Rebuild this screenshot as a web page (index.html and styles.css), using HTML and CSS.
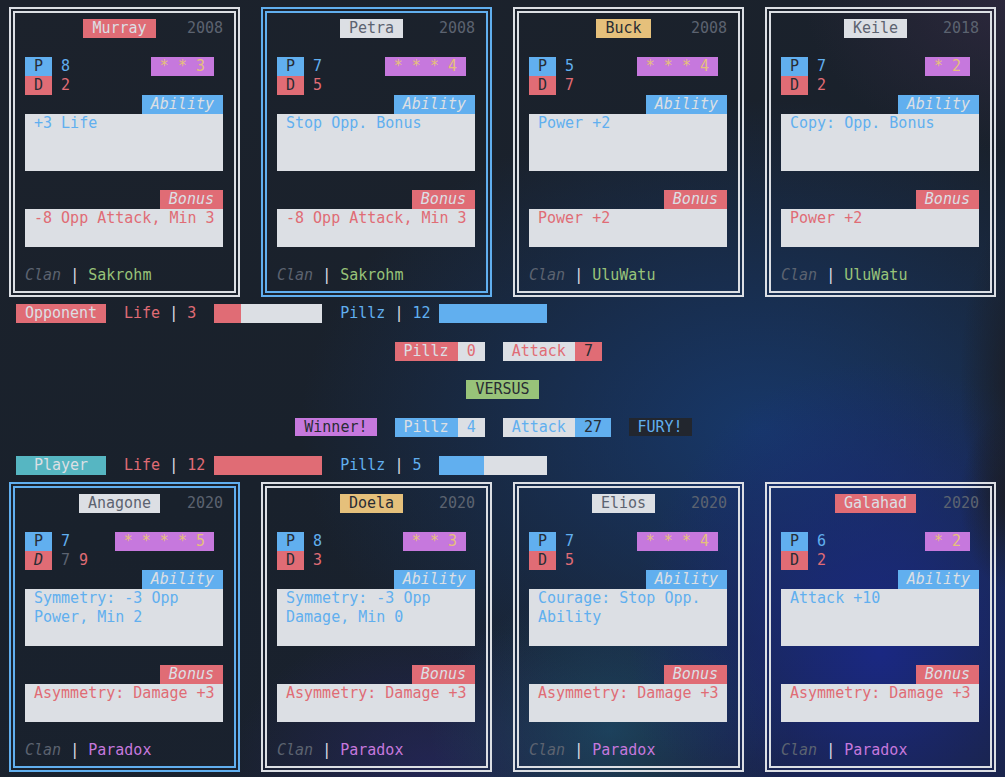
FILE: index.html
```html
<!DOCTYPE html>
<html lang="en">
<head>
  <meta charset="UTF-8">
  <meta name="viewport" content="width=device-width, initial-scale=1.0">
  <title>Pillz Duel</title>
  <link rel="stylesheet" href="styles.css">
</head>
<body>
  <div class="board">

    <!-- Opponent hand -->
    <div class="hand">
      <div class="card">
        <div class="card-head"><span class="name red">Murray</span><span class="year">2008</span></div>
        <div class="stat-row"><span class="key p">P</span><span class="val blue">8</span><span class="stars">* * 3</span></div>
        <div class="stat-row"><span class="key d">D</span><span class="val red">2</span></div>
        <span class="tag ability">Ability</span>
        <div class="text-box ability">+3 Life</div>
        <span class="tag bonus">Bonus</span>
        <div class="text-box bonus">-8 Opp Attack, Min 3</div>
        <div class="clan"><i>Clan</i> <b>|</b> <span class="green">Sakrohm</span></div>
      </div>
      <div class="card selected">
        <div class="card-head"><span class="name gray">Petra</span><span class="year">2008</span></div>
        <div class="stat-row"><span class="key p">P</span><span class="val blue">7</span><span class="stars">* * * 4</span></div>
        <div class="stat-row"><span class="key d">D</span><span class="val red">5</span></div>
        <span class="tag ability">Ability</span>
        <div class="text-box ability">Stop Opp. Bonus</div>
        <span class="tag bonus">Bonus</span>
        <div class="text-box bonus">-8 Opp Attack, Min 3</div>
        <div class="clan"><i>Clan</i> <b>|</b> <span class="green">Sakrohm</span></div>
      </div>
      <div class="card">
        <div class="card-head"><span class="name yellow">Buck</span><span class="year">2008</span></div>
        <div class="stat-row"><span class="key p">P</span><span class="val blue">5</span><span class="stars">* * * 4</span></div>
        <div class="stat-row"><span class="key d">D</span><span class="val red">7</span></div>
        <span class="tag ability">Ability</span>
        <div class="text-box ability">Power +2</div>
        <span class="tag bonus">Bonus</span>
        <div class="text-box bonus">Power +2</div>
        <div class="clan"><i>Clan</i> <b>|</b> <span class="green">UluWatu</span></div>
      </div>
      <div class="card">
        <div class="card-head"><span class="name gray">Keile</span><span class="year">2018</span></div>
        <div class="stat-row"><span class="key p">P</span><span class="val blue">7</span><span class="stars">* 2</span></div>
        <div class="stat-row"><span class="key d">D</span><span class="val red">2</span></div>
        <span class="tag ability">Ability</span>
        <div class="text-box ability">Copy: Opp. Bonus</div>
        <span class="tag bonus">Bonus</span>
        <div class="text-box bonus">Power +2</div>
        <div class="clan"><i>Clan</i> <b>|</b> <span class="green">UluWatu</span></div>
      </div>
    </div>

    <!-- Opponent status -->
    <div class="status">
      <span class="who opponent">Opponent</span>
      <span class="meter red">Life <b>|</b> <span class="num">3</span></span>
      <div class="bar"><div class="fill life" style="width: 27px"></div></div>
      <span class="meter blue">Pillz <b>|</b> <span class="num">12</span></span>
      <div class="bar"><div class="fill pillz" style="width: 108px"></div></div>
    </div>

    <div class="duel">
      <div class="duel-left"></div>
      <div class="duel-center">
        <span class="chip bg-red light">Pillz</span><span class="chip bg-gray red">0</span>
        <span class="chip bg-gray red gap">Attack</span><span class="chip bg-red dark">7</span>
      </div>
      <div class="duel-right"></div>
    </div>

    <div class="versus"><span class="chip bg-green dark">VERSUS</span></div>

    <div class="duel">
      <div class="duel-left"><span class="chip bg-purple dark">Winner!</span></div>
      <div class="duel-center">
        <span class="chip bg-blue light">Pillz</span><span class="chip bg-gray blue">4</span>
        <span class="chip bg-gray blue gap">Attack</span><span class="chip bg-blue dark">27</span>
      </div>
      <div class="duel-right"><span class="chip fury">FURY!</span></div>
    </div>

    <!-- Player status -->
    <div class="status">
      <span class="who player">Player</span>
      <span class="meter red">Life <b>|</b> <span class="num">12</span></span>
      <div class="bar"><div class="fill life" style="width: 108px"></div></div>
      <span class="meter blue">Pillz <b>|</b> <span class="num">5</span></span>
      <div class="bar"><div class="fill pillz" style="width: 45px"></div></div>
    </div>

    <!-- Player hand -->
    <div class="hand">
      <div class="card selected">
        <div class="card-head"><span class="name gray">Anagone</span><span class="year">2020</span></div>
        <div class="stat-row"><span class="key p">P</span><span class="val blue">7</span><span class="stars">* * * * 5</span></div>
        <div class="stat-row"><span class="key d"><i>D</i></span><span class="val"><span class="muted">7</span> <span class="red">9</span></span></div>
        <span class="tag ability">Ability</span>
        <div class="text-box ability">Symmetry: -3 Opp Power, Min 2</div>
        <span class="tag bonus">Bonus</span>
        <div class="text-box bonus">Asymmetry: Damage +3</div>
        <div class="clan"><i>Clan</i> <b>|</b> <span class="purple">Paradox</span></div>
      </div>
      <div class="card">
        <div class="card-head"><span class="name yellow">Doela</span><span class="year">2020</span></div>
        <div class="stat-row"><span class="key p">P</span><span class="val blue">8</span><span class="stars">* * 3</span></div>
        <div class="stat-row"><span class="key d">D</span><span class="val red">3</span></div>
        <span class="tag ability">Ability</span>
        <div class="text-box ability">Symmetry: -3 Opp Damage, Min 0</div>
        <span class="tag bonus">Bonus</span>
        <div class="text-box bonus">Asymmetry: Damage +3</div>
        <div class="clan"><i>Clan</i> <b>|</b> <span class="purple">Paradox</span></div>
      </div>
      <div class="card">
        <div class="card-head"><span class="name gray">Elios</span><span class="year">2020</span></div>
        <div class="stat-row"><span class="key p">P</span><span class="val blue">7</span><span class="stars">* * * 4</span></div>
        <div class="stat-row"><span class="key d">D</span><span class="val red">5</span></div>
        <span class="tag ability">Ability</span>
        <div class="text-box ability">Courage: Stop Opp. Ability</div>
        <span class="tag bonus">Bonus</span>
        <div class="text-box bonus">Asymmetry: Damage +3</div>
        <div class="clan"><i>Clan</i> <b>|</b> <span class="purple">Paradox</span></div>
      </div>
      <div class="card">
        <div class="card-head"><span class="name red">Galahad</span><span class="year">2020</span></div>
        <div class="stat-row"><span class="key p">P</span><span class="val blue">6</span><span class="stars">* 2</span></div>
        <div class="stat-row"><span class="key d">D</span><span class="val red">2</span></div>
        <span class="tag ability">Ability</span>
        <div class="text-box ability">Attack +10</div>
        <span class="tag bonus">Bonus</span>
        <div class="text-box bonus">Asymmetry: Damage +3</div>
        <div class="clan"><i>Clan</i> <b>|</b> <span class="purple">Paradox</span></div>
      </div>
    </div>

  </div>
</body>
</html>
```

FILE: styles.css
```css
/* Reset and base: one text cell is 9px x 19px */
* {
  margin: 0;
  padding: 0;
  box-sizing: border-box;
}
body {
  width: 1005px;
  height: 777px;
  overflow: hidden;
  font-family: "DejaVu Sans Mono", "Liberation Mono", monospace;
  font-size: 15px;
  line-height: 19px;
  color: #dcdfe4;
  background:
    radial-gradient(ellipse 60px 170px at 1020px 380px, rgba(27, 28, 34, 0.95), rgba(27, 28, 34, 0)),
    radial-gradient(ellipse 50px 90px at 1010px 500px, rgba(27, 28, 34, 0.9), rgba(27, 28, 34, 0)),
    radial-gradient(ellipse 200px 150px at 1005px 0px, rgba(58, 44, 72, 0.55), rgba(58, 44, 72, 0)),
    radial-gradient(ellipse 250px 290px at 880px 650px, rgba(26, 40, 130, 1), rgba(26, 40, 130, 0)),
    radial-gradient(ellipse 180px 140px at 610px 730px, rgba(30, 78, 110, 0.7), rgba(30, 78, 110, 0)),
    radial-gradient(ellipse 200px 150px at 430px 770px, rgba(42, 40, 112, 0.55), rgba(42, 40, 112, 0)),
    radial-gradient(ellipse 460px 330px at 760px 430px, rgba(23, 58, 112, 0.9), rgba(23, 58, 112, 0)),
    linear-gradient(160deg, #1c222c 0%, #19212c 50%, #1a2230 100%);
}

/* Colours (One Dark) */
.red { color: #e06c75; }
.blue { color: #61afef; }
.green { color: #98c379; }
.purple { color: #c678dd; }
.muted { color: #5c6370; }
.light { color: #dcdfe4; }
.dark { color: #282c34; }
.bg-red { background: #e06c75; }
.bg-blue { background: #61afef; }
.bg-gray { background: #dcdfe4; }
.bg-green { background: #98c379; }
.bg-purple { background: #c678dd; }

.board {
  display: flex;
  flex-direction: column;
}

/* Hands */
.hand {
  display: flex;
  gap: 21px;
  height: 304px;
  padding: 7px 9px;
}
.card {
  width: 231px;
  height: 290px;
  border: 6px double #dcdfe4;
  padding: 6px 11px 6px 10px;
  display: flex;
  flex-direction: column;
}
.card.selected {
  border-color: #61afef;
}

.card-head {
  display: grid;
  grid-template-columns: 1fr 9px;
  height: 19px;
  margin-bottom: 19px;
}
.name {
  grid-area: 1 / 1;
  justify-self: center;
  padding: 0 9px;
}
.name.red { background: #e06c75; color: #dcdfe4; }
.name.gray { background: #dcdfe4; color: #5c6370; }
.name.yellow { background: #e5c07b; color: #282c34; }
.year {
  grid-area: 1 / 1 / 2 / 3;
  justify-self: end;
  color: #5c6370;
}

.stat-row {
  display: flex;
  height: 19px;
}
.key {
  width: 27px;
  text-align: center;
  color: #282c34;
}
.key.p { background: #61afef; }
.key.d { background: #e06c75; }
.val {
  padding-left: 9px;
}
.stars {
  margin-left: auto;
  margin-right: 9px;
  padding: 0 9px;
  background: #c678dd;
  color: #e5c07b;
}

.tag {
  align-self: flex-end;
  padding: 0 9px;
  font-style: italic;
  color: #dcdfe4;
}
.tag.ability { background: #61afef; }
.tag.bonus { background: #e06c75; }

.text-box {
  background: #dcdfe4;
  padding: 0 6px 0 9px;
}
.text-box.ability {
  height: 57px;
  margin-bottom: 19px;
  color: #61afef;
}
.text-box.bonus {
  height: 38px;
  margin-bottom: 19px;
  color: #e06c75;
}

.clan {
  height: 19px;
  white-space: pre;
}
.clan i {
  color: #5c6370;
}
.clan b, .meter b {
  font-weight: normal;
  color: #dcdfe4;
}

/* Status lines */
.status {
  display: flex;
  height: 19px;
  padding-left: 16px;
}
.who {
  width: 90px;
  text-align: center;
  margin-right: 18px;
  color: #dcdfe4;
}
.who.opponent { background: #e06c75; }
.who.player { background: #56b6c2; }
.meter {
  white-space: pre;
}
.meter .num {
  display: inline-block;
  width: 18px;
  margin-right: 9px;
}
.bar {
  width: 108px;
  background: #dcdfe4;
  margin-right: 18px;
}
.fill {
  height: 100%;
}
.fill.life { background: #e06c75; }
.fill.pillz { background: #61afef; }

/* Duel lines */
.duel {
  display: grid;
  grid-template-columns: 1fr 216px 1fr;
  height: 19px;
  margin-top: 19px;
}
.duel-left {
  justify-self: end;
  margin-right: 18px;
}
.duel-center {
  display: flex;
}
.duel-right {
  justify-self: start;
  margin-left: 18px;
}
.chip {
  padding: 0 9px;
}
.chip.gap {
  margin-left: 18px;
}
.chip.fury {
  background: #22262e;
  color: #61afef;
}
.versus {
  display: flex;
  justify-content: center;
  height: 19px;
  margin-top: 19px;
}
.duel + .status {
  margin-top: 19px;
}
```
